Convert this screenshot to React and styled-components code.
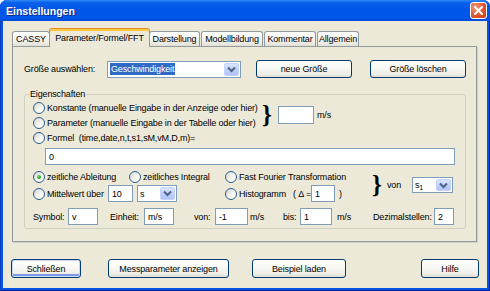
import React from "react";
import styled, { createGlobalStyle, css } from "styled-components";

const UI_FONT = `"Liberation Sans", Arial, sans-serif`;

const GlobalStyle = createGlobalStyle`
  html, body {
    margin: 0;
    padding: 0;
    background: #fff;
  }
  body {
    font-family: ${UI_FONT};
    font-size: 9px;
    letter-spacing: -0.15px;
    color: #000;
  }
  * {
    box-sizing: border-box;
  }
`;

const Window = styled.div`
  width: 490px;
  height: 291px;
  display: flex;
  flex-direction: column;
  background: #0553E3;
  border-radius: 7px 7px 0 0;
  overflow: hidden;
  box-shadow: inset 1px 0 0 #0A3FC0, inset -1px 0 0 #001A9E,
    inset 0 -1px 0 #001A9E;
`;

const TitleBar = styled.div`
  flex: none;
  height: 21px;
  display: flex;
  align-items: center;
  justify-content: space-between;
  padding: 0 3px 0 6px;
  background: linear-gradient(
    #2F8AF7 0%,
    #0B62EC 12%,
    #0055E6 45%,
    #0057EC 85%,
    #0049D6 100%
  );
`;

const Title = styled.span`
  font-weight: bold;
  font-size: 10.5px;
  letter-spacing: 0;
  color: #fff;
  text-shadow: 1px 1px 0 #0A2A8A;
`;

const CloseButton = styled.div`
  width: 17px;
  height: 17px;
  border: 1px solid #fff;
  border-radius: 3px;
  background: radial-gradient(circle at 30% 30%, #F09A7C, #E0552E 55%, #C63F1C);
  display: flex;
  align-items: center;
  justify-content: center;
`;

const Frame = styled.div`
  flex: 1;
  margin: 0 3px 3px;
  padding: 7px 10px 0 9px;
  background: #ECE9D8;
  display: flex;
  flex-direction: column;
`;

const TabStrip = styled.div`
  position: relative;
  z-index: 1;
  height: 18px;
  display: flex;
  align-items: flex-end;
  gap: 1px;
`;

const Tab = styled.div`
  width: ${(p) => p.$w}px;
  height: 15px;
  border: 1px solid #919B9C;
  border-bottom: none;
  border-radius: 3px 3px 0 0;
  background: linear-gradient(#FFFFFF, #F4F3EE 60%, #E2E0D6);
  display: flex;
  align-items: center;
  justify-content: center;
  white-space: nowrap;

  ${(p) =>
    p.$active &&
    css`
      height: 19px;
      margin: 0 -2px -1px;
      padding-bottom: 1px;
      border-top: 1px solid #E68B2C;
      background: #ECE9D8;
      box-shadow: inset 0 2px 0 #FFC73C;
    `}
`;

const Panel = styled.div`
  width: 465px;
  height: 196px;
  border: 1px solid #919B9C;
  box-shadow: 1px 1px 0 #D4D0C4;
  background: #ECE9D8;
  padding: 13px 11px 0 11px;
`;

const TopRow = styled.div`
  height: 18px;
  display: flex;
  align-items: center;
`;

const Caption = styled.span`
  flex: none;
  white-space: nowrap;
  width: ${(p) => (p.$w ? `${p.$w}px` : "auto")};
  margin-left: ${(p) => p.$ml || 0}px;
`;

const Select = styled.div`
  flex: none;
  width: ${(p) => p.$w}px;
  height: ${(p) => p.$h || 17}px;
  margin-left: ${(p) => p.$ml || 0}px;
  border: 1px solid #7F9DB9;
  background: #fff;
  padding: 1px;
  display: flex;
`;

const SelectValue = styled.div`
  flex: 1;
  display: flex;
  align-items: center;
  padding-left: 1px;
  white-space: nowrap;
`;

const Highlight = styled.span`
  background: #316AC5;
  color: #fff;
  padding: 0 1px;
  line-height: 12px;
`;

const DropButton = styled.div`
  width: 15px;
  border: 1px solid #C3D3FD;
  border-radius: 2px;
  background: linear-gradient(#D9E5FD, #BCCEF9 60%, #B0C4F5);
  display: flex;
  align-items: center;
  justify-content: center;
`;

const Button = styled.button`
  flex: none;
  width: ${(p) => p.$w}px;
  height: ${(p) => p.$h || 19}px;
  margin-left: ${(p) => p.$ml || 0}px;
  padding: 0;
  font: inherit;
  letter-spacing: inherit;
  color: #000;
  border: 1px solid #003C74;
  border-radius: 3px;
  background: linear-gradient(#FFFFFF 0%, #F8F8F4 45%, #EDECE6 85%, #D8D2C6 100%);
  box-shadow: inset 0 -1px 0 #E3E0D4;

  ${(p) =>
    p.$default &&
    css`
      box-shadow: inset 0 0 0 1px #C6DAF8, inset 0 -2px 0 1px #7D9BE2;
    `}
`;

const Group = styled.fieldset`
  margin: 10px 0 0;
  width: 442px;
  min-width: 0;
  padding: 0 0 3px 8px;
  border: 1px solid #D0D0BF;
  border-radius: 3px;
`;

const Legend = styled.legend`
  margin-left: -4px;
  padding: 0 1px;
  line-height: 12px;
`;

const BlockA = styled.div`
  display: flex;
  align-items: center;
`;

const OptionColumn = styled.div`
  width: 229px;
  display: flex;
  flex-direction: column;
`;

const Option = styled.div`
  height: ${(p) => p.$h || 15}px;
  display: flex;
  align-items: center;
  white-space: nowrap;
  grid-area: ${(p) => p.$area || "auto"};
`;

const Radio = styled.span`
  flex: none;
  width: 12px;
  height: 12px;
  margin-right: 2px;
  border: 1px solid #2B5D8E;
  border-radius: 50%;
  background: linear-gradient(135deg, #D9D8D0 0%, #F4F4F0 55%, #FFFFFF 100%);
  display: flex;
  align-items: center;
  justify-content: center;

  ${(p) =>
    p.$checked &&
    css`
      &::after {
        content: "";
        width: 4px;
        height: 4px;
        border-radius: 50%;
        background: radial-gradient(circle at 35% 35%, #6BE36A, #24A824 60%, #17801A);
      }
    `}
`;

const Brace = styled.span`
  flex: none;
  width: ${(p) => p.$w || 8}px;
  height: 22px;
  font-family: "Liberation Serif", serif;
  font-weight: bold;
  font-size: 25px;
  line-height: 22px;
  display: flex;
  align-items: center;
`;

const TextBox = styled.input`
  flex: none;
  width: ${(p) => p.$w}px;
  height: ${(p) => p.$h || 17}px;
  margin-left: ${(p) => p.$ml || 0}px;
  padding: 0 0 0 3px;
  border: 1px solid #7F9DB9;
  background: #fff;
  font: inherit;
  letter-spacing: inherit;
  color: #000;
  outline: none;
`;

const FormulaBox = styled(TextBox)`
  display: block;
  margin-top: 3px;
`;

const BlockB = styled.div`
  margin-top: 3px;
  display: grid;
  grid-template-columns: 96px 96px 147px 15px 25px 41px;
  grid-template-rows: 17px 17px;
  grid-template-areas:
    "abl int fft brace von sel"
    "mit mit his brace von sel";
  align-items: center;
`;

const SideCell = styled.div`
  grid-area: ${(p) => p.$area};
  display: flex;
  align-items: center;
`;

const Sub = styled.span`
  font-size: 7px;
  position: relative;
  top: 2px;
`;

const FieldRow = styled.div`
  margin-top: 6px;
  height: 17px;
  display: flex;
  align-items: center;
`;

const ButtonRow = styled.div`
  margin: 17px 0 0 -1px;
  display: flex;
  align-items: center;
`;

const Chevron = () => (
  <svg width="9" height="7" viewBox="0 0 9 7">
    <path d="M1 1.5 L4.5 5 L8 1.5" fill="none" stroke="#4D6185" strokeWidth="2" />
  </svg>
);

const CloseIcon = () => (
  <svg width="9" height="9" viewBox="0 0 9 9">
    <path d="M1 1 L8 8 M8 1 L1 8" stroke="#fff" strokeWidth="2" strokeLinecap="square" />
  </svg>
);

const tabs = [
  { label: "CASSY", w: 38 },
  { label: "Parameter/Formel/FFT", w: 101, active: true },
  { label: "Darstellung", w: 51 },
  { label: "Modellbildung", w: 62 },
  { label: "Kommentar", w: 52 },
  { label: "Allgemein", w: 42 },
];

export default function App() {
  return (
    <>
      <GlobalStyle />
      <Window>
        <TitleBar>
          <Title>Einstellungen</Title>
          <CloseButton>
            <CloseIcon />
          </CloseButton>
        </TitleBar>

        <Frame>
          <TabStrip>
            {tabs.map((t) => (
              <Tab key={t.label} $w={t.w} $active={t.active}>
                {t.label}
              </Tab>
            ))}
          </TabStrip>

          <Panel>
            <TopRow>
              <Caption $w={83}>Größe auswählen:</Caption>
              <Select $w={134}>
                <SelectValue>
                  <Highlight>Geschwindigkeit</Highlight>
                </SelectValue>
                <DropButton>
                  <Chevron />
                </DropButton>
              </Select>
              <Button $w={96} $h={18} $ml={15}>
                neue Größe
              </Button>
              <Button $w={96} $h={18} $ml={18}>
                Größe löschen
              </Button>
            </TopRow>

            <Group>
              <Legend>Eigenschaften</Legend>

              <BlockA>
                <OptionColumn>
                  <Option>
                    <Radio />
                    Konstante (manuelle Eingabe in der Anzeige oder hier)
                  </Option>
                  <Option>
                    <Radio />
                    Parameter (manuelle Eingabe in der Tabelle oder hier)
                  </Option>
                </OptionColumn>
                <Brace>{"}"}</Brace>
                <TextBox $w={36} $h={18} $ml={8} readOnly defaultValue="" />
                <Caption $ml={3}>m/s</Caption>
              </BlockA>

              <Option>
                <Radio />
                Formel&nbsp;&nbsp;(time,date,n,t,s1,sM,vM,D,m)=
              </Option>
              <FormulaBox $w={410} $ml={12} readOnly defaultValue="0" />

              <BlockB>
                <Option $h={17} $area="abl">
                  <Radio $checked />
                  zeitliche Ableitung
                </Option>
                <Option $h={17} $area="int">
                  <Radio />
                  zeitliches Integral
                </Option>
                <Option $h={17} $area="fft">
                  <Radio />
                  Fast Fourier Transformation
                </Option>
                <SideCell $area="brace">
                  <Brace $w={15}>{"}"}</Brace>
                </SideCell>
                <SideCell $area="von">
                  <Caption>von</Caption>
                </SideCell>
                <SideCell $area="sel">
                  <Select $w={41} $h={16}>
                    <SelectValue>
                      s<Sub>1</Sub>
                    </SelectValue>
                    <DropButton>
                      <Chevron />
                    </DropButton>
                  </Select>
                </SideCell>

                <Option $h={17} $area="mit">
                  <Radio />
                  <Caption $w={61}>Mittelwert über</Caption>
                  <TextBox $w={25} $h={17} readOnly defaultValue="10" />
                  <Select $w={40} $h={17} $ml={4}>
                    <SelectValue>s</SelectValue>
                    <DropButton>
                      <Chevron />
                    </DropButton>
                  </Select>
                </Option>
                <Option $h={17} $area="his">
                  <Radio />
                  <Caption $w={72}>Histogramm&nbsp;&nbsp;&nbsp;( Δ =</Caption>
                  <TextBox $w={24} $h={17} readOnly defaultValue="1" />
                  <Caption $ml={4}>)</Caption>
                </Option>
              </BlockB>

              <FieldRow>
                <Caption $w={35}>Symbol:</Caption>
                <TextBox $w={30} readOnly defaultValue="v" />
                <Caption $w={34} $ml={12}>Einheit:</Caption>
                <TextBox $w={30} readOnly defaultValue="m/s" />
                <Caption $w={21} $ml={20}>von:</Caption>
                <TextBox $w={33} readOnly defaultValue="-1" />
                <Caption $w={33} $ml={2}>m/s</Caption>
                <Caption $w={17}>bis:</Caption>
                <TextBox $w={32} readOnly defaultValue="1" />
                <Caption $w={36} $ml={5}>m/s</Caption>
                <Caption $w={61}>Dezimalstellen:</Caption>
                <TextBox $w={20} readOnly defaultValue="2" />
              </FieldRow>
            </Group>
          </Panel>

          <ButtonRow>
            <Button $w={70} $default>
              Schließen
            </Button>
            <Button $w={121} $ml={27}>
              Messparameter anzeigen
            </Button>
            <Button $w={94} $ml={23}>
              Beispiel laden
            </Button>
            <Button $w={58} $ml={75}>
              Hilfe
            </Button>
          </ButtonRow>
        </Frame>
      </Window>
    </>
  );
}
